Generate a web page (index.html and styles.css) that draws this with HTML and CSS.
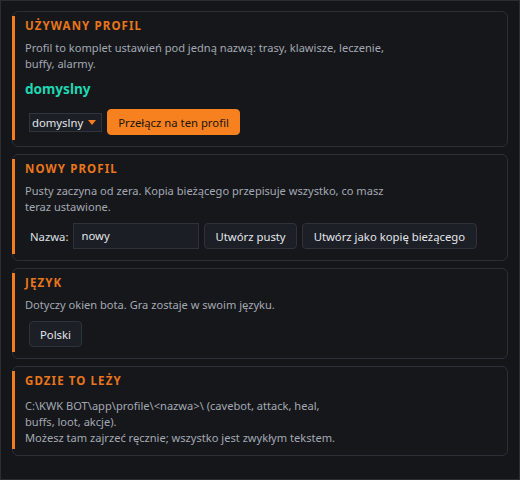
FILE: index.html
```html
<!DOCTYPE html>
<html lang="pl">
<head>
<meta charset="utf-8">
<link rel="stylesheet" href="styles.css">
</head>
<body>
<div class="window">
  <section class="card card-profile">
    <h2 class="title">UŻYWANY PROFIL</h2>
    <p class="desc">Profil to komplet ustawień pod jedną nazwą: trasy, klawisze, leczenie,<br>buffy, alarmy.</p>
    <div class="current">domyslny</div>
    <div class="row row-profile">
      <div class="combo"><span>domyslny</span><span class="arrow"></span></div>
      <button class="btn btn-primary">Przełącz na ten profil</button>
    </div>
  </section>
  <section class="card card-new">
    <h2 class="title">NOWY PROFIL</h2>
    <p class="desc">Pusty zaczyna od zera. Kopia bieżącego przepisuje wszystko, co masz<br>teraz ustawione.</p>
    <div class="row row-new">
      <label class="label">Nazwa:</label>
      <div class="input">nowy</div>
      <button class="btn">Utwórz pusty</button>
      <button class="btn btn-wide">Utwórz jako kopię bieżącego</button>
    </div>
  </section>
  <section class="card card-lang">
    <h2 class="title">JĘZYK</h2>
    <p class="desc">Dotyczy okien bota. Gra zostaje w swoim języku.</p>
    <div class="row row-lang">
      <button class="btn btn-lang">Polski</button>
    </div>
  </section>
  <section class="card card-path">
    <h2 class="title">GDZIE TO LEŻY</h2>
    <p class="desc desc-path">C:\KWK BOT\app\profile\&lt;nazwa&gt;\ (cavebot, attack, heal,<br>buffs, loot, akcje).<br>Możesz tam zajrzeć ręcznie; wszystko jest zwykłym tekstem.</p>
  </section>
</div>
</body>
</html>
```
FILE: styles.css
```css
html, body {
  margin: 0;
  padding: 0;
  background: #15161a;
}
body {
  font-family: "Noto Sans", "Open Sans", sans-serif;
  font-size: 11.1px;
  color: #a3a9b2;
}
.window {
  width: 520px;
  height: 480px;
  box-sizing: border-box;
  border: 1px solid #2a2d34;
  padding: 10px 11px;
  display: flex;
  flex-direction: column;
  gap: 7px;
}
.card {
  position: relative;
  border: 1px solid #2c2f37;
  border-radius: 6px;
  background: #16171b;
  padding: 5px 12px 11px 12px;
}
.card::before {
  content: "";
  position: absolute;
  left: -1px;
  top: 4px;
  bottom: 6px;
  width: 3px;
  background: #f57c1c;
}
.card-path {
  padding-bottom: 9px;
}
.title {
  margin: 0;
  font-size: 11.5px;
  font-weight: 700;
  letter-spacing: 1.1px;
  line-height: 18px;
  color: #e8761c;
}
.desc {
  margin: 5px 0 0 0;
  line-height: 16px;
  color: #a3a9b2;
}
.current {
  margin-top: 7px;
  font-size: 13.6px;
  font-weight: 700;
  line-height: 20px;
  color: #1ed8b2;
}
.row {
  display: flex;
  align-items: center;
}
.row-profile {
  margin-top: 10px;
  padding-left: 4px;
  gap: 5px;
}
.combo {
  display: flex;
  align-items: center;
  gap: 5px;
  height: 19px;
  box-sizing: border-box;
  padding: 0 5px 0 2px;
  background: #1b1e24;
  border: 1px solid #30343d;
  color: #e3e6ea;
  font-size: 11.3px;
}
.arrow {
  width: 0;
  height: 0;
  border-left: 4px solid transparent;
  border-right: 4px solid transparent;
  border-top: 5px solid #f57c1c;
}
.btn {
  font-family: inherit;
  font-size: 11.3px;
  height: 26px;
  padding: 0 10px;
  border-radius: 4px;
  border: 1px solid #2e323a;
  background: #1c1f25;
  color: #e3e6ea;
}
.btn-primary {
  background: #f7811f;
  border-color: #f7811f;
  color: #1c1410;
}
.row-new {
  margin-top: 8px;
  padding-left: 5px;
  gap: 5px;
}
.label {
  color: #dde0e4;
  font-size: 11.3px;
}
.input {
  width: 126px;
  height: 26px;
  box-sizing: border-box;
  padding: 0 7px;
  line-height: 24px;
  background: #1b1e24;
  border: 1px solid #2e323a;
  color: #e3e6ea;
  font-size: 11.3px;
}
.btn-wide {
  padding: 0 11px;
}
.row-lang {
  margin-top: 8px;
  padding-left: 4px;
}
.desc-path {
  margin-top: 8px;
}
```
